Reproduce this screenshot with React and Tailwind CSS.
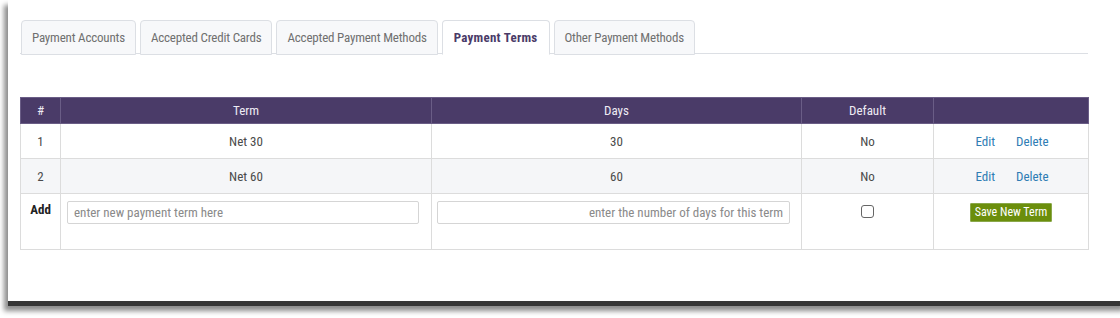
import React from "react";

const FONT = "font-['Liberation_Sans_Narrow','Roboto_Condensed','Roboto',sans-serif]";

const tabs = [
  "Payment Accounts",
  "Accepted Credit Cards",
  "Accepted Payment Methods",
  "Payment Terms",
  "Other Payment Methods",
];

const rows = [
  { id: 1, term: "Net 30", days: "30", def: "No" },
  { id: 2, term: "Net 60", days: "60", def: "No" },
];

const cell = "border border-[#dcdcdc] text-center align-top pt-[8px] font-normal";

export default function App() {
  return (
    <div className={`w-[1120px] h-[318px] bg-white overflow-hidden ${FONT}`}>
      <div className="ml-[8px] w-[1120px] h-[306px] bg-white border-b-[5px] border-[#363636] shadow-[-4px_5px_5px_rgba(0,0,0,0.45)] pt-[20px] pl-[12px]">
        {/* Tabs */}
        <div className="flex w-[1068px] border-b border-[#dcdfe4] h-[34px] gap-[4px] pl-[1px]">
          {tabs.map((t) => {
            const active = t === "Payment Terms";
            return (
              <div
                key={t}
                className={
                  "h-[35px] flex items-center rounded-t-[4px] border text-[13px] " +
                  (active
                    ? "px-[11px] bg-white border-[#dcdfe4] border-b-white font-bold text-[#4a3b68] tracking-[0.25px]"
                    : "px-[10px] bg-[#f7f8fa] border-[#dcdfe4] text-[#707070] tracking-[-0.2px]")
                }
              >
                {t}
              </div>
            );
          })}
        </div>

        {/* Table */}
        <table className="mt-[43px] w-[1068px] border-collapse table-fixed text-[13px] text-[#4a4a4a]">
          <colgroup>
            <col className="w-[40px]" />
            <col className="w-[371px]" />
            <col className="w-[370px]" />
            <col className="w-[132px]" />
            <col className="w-[155px]" />
          </colgroup>
          <thead>
            <tr className="bg-[#4a3b68] text-[#eeebf4] h-[26px]">
              <th className="font-normal border border-[#6a5d86] text-center">#</th>
              <th className="font-normal border border-[#6a5d86] text-center">Term</th>
              <th className="font-normal border border-[#6a5d86] text-center">Days</th>
              <th className="font-normal border border-[#6a5d86] text-center">Default</th>
              <th className="font-normal border border-[#6a5d86]"></th>
            </tr>
          </thead>
          <tbody>
            {rows.map((r, i) => (
              <tr key={r.id} className={"h-[35px] " + (i % 2 ? "bg-[#f5f6f8]" : "bg-white")}>
                <td className={cell}>{r.id}</td>
                <td className={cell}>{r.term}</td>
                <td className={cell}>{r.days}</td>
                <td className={cell}>{r.def}</td>
                <td className={cell}>
                  <div className="flex justify-center gap-[21px] text-[#2f7db4] pl-[2px]">
                    <span>Edit</span>
                    <span>Delete</span>
                  </div>
                </td>
              </tr>
            ))}
            <tr className="h-[56px] bg-white">
              <td className="border border-[#dcdcdc] text-center align-top pt-[6px] font-bold text-[#222]">Add</td>
              <td className="border border-[#dcdcdc] align-top pt-[7px] pl-[6px]">
                <input
                  placeholder="enter new payment term here"
                  className={`w-[352px] h-[23px] border border-[#d5d5d5] rounded-[2px] px-[6px] text-[13px] placeholder:text-[#8a8a8a] outline-none ${FONT}`}
                />
              </td>
              <td className="border border-[#dcdcdc] align-top pt-[7px] pl-[5px]">
                <input
                  placeholder="enter the number of days for this term"
                  className={`w-[353px] h-[23px] border border-[#d5d5d5] rounded-[2px] px-[6px] text-right text-[13px] placeholder:text-[#8a8a8a] outline-none ${FONT}`}
                />
              </td>
              <td className="border border-[#dcdcdc] align-top pt-[10px] text-center">
                <span className="inline-block w-[13px] h-[13px] border border-[#666] rounded-[3px] bg-white"></span>
              </td>
              <td className="border border-[#dcdcdc] align-top pt-[8px] text-center">
                <span className="inline-block h-[19px] leading-[17px] px-[4px] bg-[#6b8e0c] border border-[#8aa84a] text-white text-[12px] rounded-[1px]">
                  Save New Term
                </span>
              </td>
            </tr>
          </tbody>
        </table>
      </div>
    </div>
  );
}
